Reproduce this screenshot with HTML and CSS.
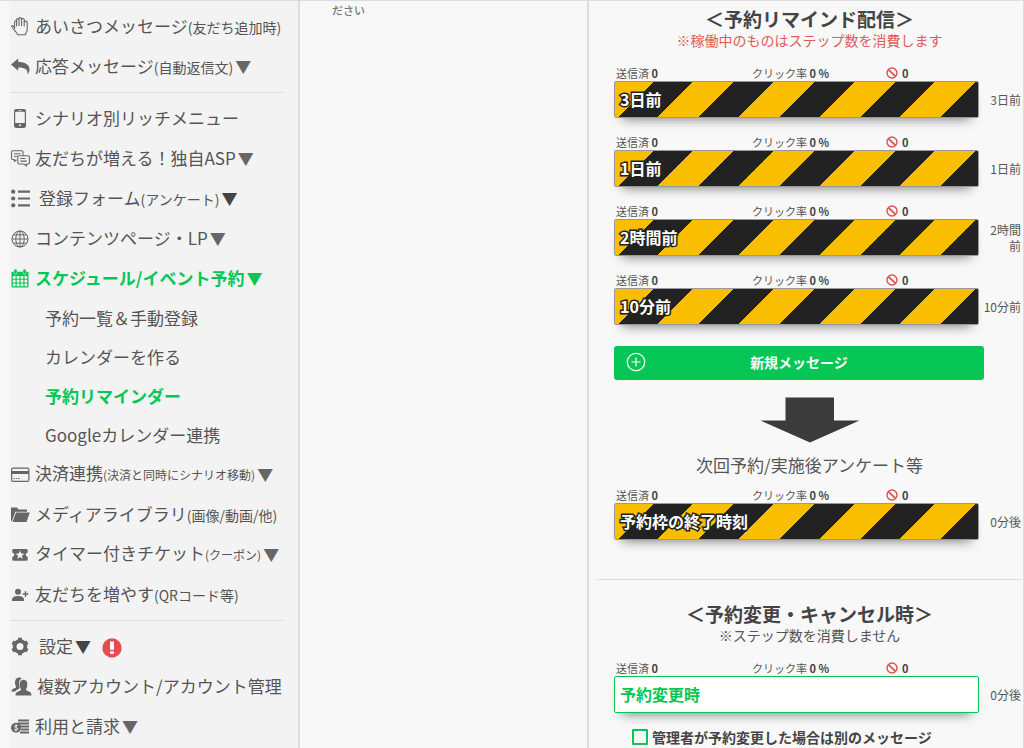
FILE: index.html
```html
<!DOCTYPE html>
<html lang="ja">
<head>
<meta charset="utf-8">
<meta name="viewport" content="width=device-width, initial-scale=1">
<title>予約リマインダー</title>
<link rel="stylesheet" href="styles.css">
</head>
<body>
<svg class="defs" aria-hidden="true">
  <symbol id="ban" viewBox="0 0 12 12"><circle cx="6" cy="6" r="5" fill="none" stroke="currentColor" stroke-width="1.4"/><path d="M2.4 2.6l7.2 6.8" stroke="currentColor" stroke-width="1.8"/></symbol>
</svg>
<div class="app">
  <nav class="sidebar">
    <ul class="menu">
      <li><a class="item" href="#"><svg class="icon" viewBox="0 0 19 19" fill="none" stroke="currentColor" stroke-width="1.1" stroke-linejoin="round" stroke-linecap="round"><path d="M3.600 11.400V5c0-1.600 2-1.600 2 0V9M5.600 8.500V2.900c0-1.700 2.400-1.700 2.400 0V8.500M8 8.500V1.900c0-1.700 2.600-1.700 2.600 0V8.500M10.600 8.500V2.700c0-1.700 2.600-1.700 2.600 0V9M13.200 5.500c0-1.900 3-1.900 3 0V13c0 2.200-1.700 2.300-1.700 4.800H6.500c0-2.200-2-2.800-3.200-4.800L.9 10C.3 8.900 1.500 8 2.300 8.900l1.300 1.500"/></svg><span>あいさつメッセージ<small>(友だち追加時)</small></span></a></li>
      <li><a class="item" href="#"><svg class="icon" viewBox="0 0 19 19" fill="currentColor"><path d="M0 7.500L7.200 1.600v3.300C14 4.900 18.500 7.500 18.500 12.500c0 2-.7 3.600-2 5.100.9-4.500-2.200-7-9.300-7v3.200z"/></svg><span>応答メッセージ<small>(自動返信文)</small></span><span class="caret">▼</span></a></li>
    </ul>
    <hr>
    <ul class="menu">
      <li><a class="item" href="#"><svg class="icon" viewBox="0 0 19 19"><rect x="3.600" y=".6" width="10.800" height="17.800" rx="1.800" fill="none" stroke="currentColor" stroke-width="1.200"/><path d="M3.500 14h11v3.500q0 1-1 1h-9q-1 0-1-1zM3.500 2.800V1.500q0-1 1-1h9q1 0 1 1v1.300z" fill="currentColor"/><circle cx="9" cy="16.200" r="1" fill="#f3f3f3"/><path d="M7.500 1.600h3" stroke="#f3f3f3" stroke-width=".7"/></svg><span>シナリオ別リッチメニュー</span></a></li>
      <li><a class="item" href="#"><svg class="icon" viewBox="0 0 19 19" fill="none" stroke="currentColor" stroke-width="1.100" stroke-linejoin="round"><path d="M5.500 10.800L3.300 12.500V10.500H1.700Q.6 10.500.6 9.400V3Q.6 1.800 1.700 1.800h9.200q1.100 0 1.100 1.200v3.500M3 4.700h6.500M3 7.200h3.500"/><path d="M8 6.700h9.200q1.200 0 1.200 1.200v5.900q0 1.200-1.200 1.200h-1.600v2L13 15H8q-1.200 0-1.200-1.200V7.900Q6.800 6.700 8 6.700zM9.300 9.500h5M9.300 12.100h6.500"/></svg><span>友だちが増える！独自ASP</span><span class="caret">▼</span></a></li>
      <li><a class="item wide" href="#"><svg class="icon" viewBox="0 0 19 19" fill="currentColor"><circle cx="2.200" cy="2.700" r="2.100"/><circle cx="2.200" cy="9.500" r="2.100"/><circle cx="2.200" cy="16.300" r="2.100"/><path d="M7 1.600h12v2.200H7zM7 8.400h12v2.200H7zM7 15.200h12v2.200H7z"/></svg><span>登録フォーム<small>(アンケート)</small></span><span class="caret dark">▼</span></a></li>
      <li><a class="item" href="#"><svg class="icon" viewBox="0 0 19 19" fill="none" stroke="currentColor"><circle cx="9" cy="10" r="8"/><ellipse cx="9" cy="10" rx="4.200" ry="8"/><path d="M9 2v16M1 10h16M2.300 5.800h13.400M2.300 14.200h13.400"/></svg><span>コンテンツページ・LP</span><span class="caret">▼</span></a></li>
      <li><a class="item active" href="#"><svg class="icon" viewBox="0 0 19 19"><path fill="currentColor" fill-rule="evenodd" d="M1.500 2.800h1.700V1.500q0-1.300 1.300-1.300t1.300 1.300v1.300h6.400V1.500q0-1.300 1.300-1.300t1.300 1.300v1.300h1.700q1 0 1 1V17.500q0 1-1 1h-15q-1 0-1-1V3.800q0-1 1-1zM1.800 7v2.700h2.800V7zM5.700 7v2.700h2.800V7zM9.600 7v2.700h2.800V7zM13.500 7v2.700h2.700V7zM1.800 10.800v2.600h2.800v-2.600zM5.700 10.800v2.600h2.800v-2.600zM9.600 10.800v2.600h2.800v-2.600zM13.500 10.800v2.600h2.700v-2.600zM1.800 14.500v2.700h2.800v-2.700zM5.700 14.500v2.700h2.800v-2.700zM9.600 14.500v2.700h2.800v-2.700zM13.500 14.500v2.700h2.700v-2.700z"/><path d="M3.200 3.500q0 2 1.300 2t1.300-2M12.200 3.500q0 2 1.300 2t1.300-2" fill="none" stroke="#f3f3f3" stroke-width=".6"/></svg><span>スケジュール/イベント予約</span><span class="caret">▼</span></a>
        <ul class="submenu">
          <li><a class="item" href="#">予約一覧＆手動登録</a></li>
          <li><a class="item" href="#">カレンダーを作る</a></li>
          <li><a class="item active" href="#" aria-current="page">予約リマインダー</a></li>
          <li><a class="item" href="#">Googleカレンダー連携</a></li>
        </ul>
      </li>
      <li><a class="item" href="#"><svg class="icon" viewBox="0 0 19 19"><rect x=".6" y="3.100" width="17.300" height="13.300" rx="1.500" fill="none" stroke="currentColor" stroke-width="1.200"/><path d="M.6 6h17.300v3H.6z" fill="currentColor"/><path d="M2.500 13.500h1.500M5 13.500h1M7 13.500h1.500" stroke="currentColor"/></svg><span>決済連携<small class="dense">(決済と同時にシナリオ移動)</small></span><span class="caret">▼</span></a></li>
      <li><a class="item" href="#"><svg class="icon" viewBox="0 0 19 19" fill="currentColor"><path d="M0 16V2.500h6l1.500 2H16v2.200H4.300L1 16z"/><path d="M5 7.600h13.800L15.500 17H1.500z"/></svg><span>メディアライブラリ<small>(画像/動画/他)</small></span></a></li>
      <li><a class="item" href="#"><svg class="icon" viewBox="0 0 19 19"><path fill="currentColor" d="M2.500 4h13q1.200 0 1.200 1.200v2.600a2 2 0 0 0 0 4v2.700q0 1.200-1.200 1.200h-13q-1.200 0-1.200-1.200v-2.700a2 2 0 0 0 0-4V5.200Q1.300 4 2.500 4z"/><path fill="#f3f3f3" d="M9 5.500l1.200 3 3.200.2-2.500 2 .9 3.200L9 12.100l-2.800 1.800.9-3.200-2.500-2 3.200-.2z"/></svg><span>タイマー付きチケット<small class="dense">(クーポン)</small></span><span class="caret">▼</span></a></li>
      <li><a class="item" href="#"><svg class="icon" viewBox="0 0 19 19" fill="currentColor"><circle cx="7" cy="6.800" r="3"/><path d="M1 16v-1.500q0-3.500 6-3.500t6 3.500V16zM13.800 6.300h1.400v2h2.200v1.400h-2.200v2.200h-1.400V9.700h-2.100V8.300h2.100z"/></svg><span>友だちを増やす<small>(QRコード等)</small></span></a></li>
    </ul>
    <hr>
    <ul class="menu">
      <li><a class="item wide" href="#"><svg class="icon" viewBox="0 0 19 19" fill="none" stroke="currentColor"><circle cx="9" cy="9.500" r="5.400" stroke-width="3.800"/><path d="M9 .8v3M9 15.200v3M1.500 5.200l2.600 1.500M13.900 12.300l2.600 1.500M1.500 13.800l2.600-1.500M13.900 6.700l2.600-1.500" stroke-width="4"/></svg><span>設定</span><span class="caret dark">▼</span><svg class="alert" viewBox="0 0 20 20" role="img" aria-label="要確認"><circle cx="10" cy="10" r="9.700" fill="#e05050"/><path d="M8 3.500h4v8.300H8zM8.200 13.200h3.600v2.800H8.200z" fill="#fff"/></svg></a></li>
      <li><a class="item accounts" href="#"><svg class="icon" viewBox="0 0 21 19" fill="currentColor"><path d="M.3 14.500c0-2 1.700-2.600 4.300-3.700 1-.6.4-1.500-.1-2.200-1.200-4 0-8 3.500-8 1.300 0 2.200.4 2.700 1C8 3 7.500 5.500 8.200 9c.5 1.500 1 2.200-.5 3-1.500.6-2.500 1.100-3.300 2.500z"/><path d="M4.500 18.500c0-3.300 2-3.800 4.500-4.800 1.600-.7 1-1.800.3-2.700-1.500-4.500-.5-8.200 3.200-8.200s4.700 3.700 3.200 8.200c-.7.900-1.300 2 .3 2.700 2.500 1 4.500 1.500 4.500 4.800z"/></svg><span>複数アカウント/アカウント管理</span></a></li>
      <li><a class="item" href="#"><svg class="icon" viewBox="0 0 19 19"><path d="M7 3.500h11M7 6.500h11M9 9.500h9M10 12.500h8M9 15.500h9" stroke="currentColor" stroke-width="1.900"/><circle cx="5" cy="10.800" r="5" fill="currentColor"/><path d="M6.800 8.800Q4 7.500 3.600 9.300c0 1.400 3 .9 3 2.700 0 1.700-2.300 1.500-3.400.7M5 7.200v7.200" fill="none" stroke="#f3f3f3" stroke-width=".9"/></svg><span>利用と請求</span><span class="caret">▼</span></a></li>
    </ul>
  </nav>

  <section class="middle"><p class="note">ださい</p></section>

  <main class="content">
    <h2 class="title">＜予約リマインド配信＞</h2>
    <p class="sub warn">※稼働中のものはステップ数を消費します</p>
    <div class="messages">
      <article><div class="stats"><span>送信済 <b>0</b></span><span>クリック率 <b>0 %</b></span><span class="blocked"><svg class="ban" role="img" aria-label="ブロック"><use href="#ban"/></svg><b>0</b></span></div><div class="row"><a class="bar striped" href="#">3日前</a><span class="when">3日前</span></div></article>
      <article><div class="stats"><span>送信済 <b>0</b></span><span>クリック率 <b>0 %</b></span><span class="blocked"><svg class="ban" role="img" aria-label="ブロック"><use href="#ban"/></svg><b>0</b></span></div><div class="row"><a class="bar striped" href="#">1日前</a><span class="when">1日前</span></div></article>
      <article><div class="stats"><span>送信済 <b>0</b></span><span>クリック率 <b>0 %</b></span><span class="blocked"><svg class="ban" role="img" aria-label="ブロック"><use href="#ban"/></svg><b>0</b></span></div><div class="row"><a class="bar striped" href="#">2時間前</a><span class="when">2時間前</span></div></article>
      <article><div class="stats"><span>送信済 <b>0</b></span><span>クリック率 <b>0 %</b></span><span class="blocked"><svg class="ban" role="img" aria-label="ブロック"><use href="#ban"/></svg><b>0</b></span></div><div class="row"><a class="bar striped" href="#">10分前</a><span class="when">10分前</span></div></article>
    </div>
    <button class="new" type="button"><svg class="plus" viewBox="0 0 20 20" fill="none" stroke="currentColor" stroke-width="1.200" aria-hidden="true"><circle cx="10" cy="10" r="8.700"/><path d="M10 5.500v9M5.500 10h9"/></svg><span>新規メッセージ</span></button>
    <svg class="arrow" viewBox="0 0 100 46" aria-hidden="true"><path d="M25.500 0.500h48.500v23h25.500L50 45.500.5 23.500h25z" fill="#3b3b3b"/></svg>
    <p class="after">次回予約/実施後アンケート等</p>
    <div class="messages after-list">
      <article><div class="stats"><span>送信済 <b>0</b></span><span>クリック率 <b>0 %</b></span><span class="blocked"><svg class="ban" role="img" aria-label="ブロック"><use href="#ban"/></svg><b>0</b></span></div><div class="row"><a class="bar striped" href="#">予約枠の終了時刻</a><span class="when">0分後</span></div></article>
    </div>
    <hr class="divider">
    <h2 class="title">＜予約変更・キャンセル時＞</h2>
    <p class="sub">※ステップ数を消費しません</p>
    <div class="messages">
      <article><div class="stats"><span>送信済 <b>0</b></span><span>クリック率 <b>0 %</b></span><span class="blocked"><svg class="ban" role="img" aria-label="ブロック"><use href="#ban"/></svg><b>0</b></span></div><div class="row"><a class="bar plain" href="#">予約変更時</a><span class="when">0分後</span></div></article>
    </div>
    <label class="check"><input type="checkbox"><span>管理者が予約変更した場合は別のメッセージ</span></label>
  </main>
</div>
</body>
</html>
```
FILE: styles.css
```css
* { box-sizing: border-box; }
body {
  margin: 0;
  background: #f8f8f8;
  color: #555;
  font-family: "Noto Sans CJK JP", sans-serif;
  font-size: 17px;
}
h2, p, ul { margin: 0; padding: 0; }
ul { list-style: none; }
a { color: inherit; text-decoration: none; }
.defs { display: none; }
.app {
  display: grid;
  grid-template-columns: 300px minmax(0, 289fr) minmax(0, 435fr);
  min-height: 100vh;
  border-top: 1px solid #ddd;
}

/* Sidebar */
.sidebar {
  margin-left: 9px;
  padding: 5px 14px 0 2px;
  background: #f3f3f3;
  border-right: 2px solid #ddd;
}
.sidebar hr {
  height: 1px;
  margin: 6px 0 5px;
  border: 0;
  background: #ddd;
}
.item {
  display: flex;
  align-items: center;
  height: 40px;
  gap: 5px;
  line-height: 24px;
  white-space: nowrap;
}
.item small { font-size: 14px; }
.item small.dense { font-size: 12px; }
.icon { flex: none; width: 19px; height: 19px; color: #666; }
.item.wide .icon { margin-right: 4px; }
.item.accounts .icon { width: 21px; }
.caret { margin-left: -3px; font-size: 16px; color: #666; }
.caret.dark { color: #444; }
.item.active, .item.active .icon, .item.active .caret { color: #06c755; }
.item.active { font-weight: 700; }
.alert { width: 20px; height: 20px; margin: 4px 0 0 6px; }
.submenu { padding-left: 34px; }
.submenu .item { height: 39px; }

/* Middle column */
.middle { padding: 0 32px; border-right: 2px solid #ddd; }
.note { font-size: 11px; font-weight: 500; line-height: 18px; color: #777; }

/* Content */
.content { padding: 6px 1px 0 8px; border-right: 1px solid #ddd; }
.title { font-size: 19px; line-height: 24px; text-align: center; color: #444; }
.sub { font-size: 14px; line-height: 18px; text-align: center; }
.sub.warn { color: #e05a5a; }
.messages { display: grid; gap: 16px; margin: 16px 0 0 17px; }
.stats {
  display: grid;
  grid-template-columns: 136px 134px 1fr;
  padding-left: 2px;
  font-size: 11px;
  line-height: 16px;
}
.stats b { color: #444; }
.blocked { display: flex; align-items: center; gap: 4px; }
.ban { width: 12px; height: 12px; color: #e05050; }
.row {
  display: grid;
  grid-template-columns: minmax(0, 1fr) 43px;
  align-items: center;
}
.bar {
  display: flex;
  align-items: center;
  height: 37px;
  padding: 0 5px 2px;
  border: 1px solid #999;
  border-radius: 2px;
  box-shadow: 0 9px 12px -8px rgba(0, 0, 0, .5);
  font-size: 16px;
  font-weight: 700;
}
.striped {
  background: repeating-linear-gradient(135deg, #fabe00 0 27px, #222 27px 55px, #fabe00 55px 57px);
  color: #fff;
  -webkit-text-stroke: 3px #222;
  paint-order: stroke fill;
}
.plain { border-color: #06c755; background: #fff; color: #06c755; }
.when { padding-right: 1px; font-size: 12px; line-height: 16px; text-align: right; }
.new {
  display: grid;
  grid-template-columns: 20px 1fr 20px;
  align-items: center;
  width: calc(100% - 55px);
  height: 34px;
  margin: 21px 0 0 17px;
  padding: 0 12px 2px;
  border: 0;
  border-radius: 3px;
  background: #06c755;
  color: #fff;
  font-family: inherit;
  font-size: 14px;
  font-weight: 700;
}
.plus { width: 20px; height: 20px; }
.arrow { display: block; width: 100px; height: 46px; margin: 17px auto 10px; }
.after { line-height: 24px; text-align: center; }
.after-list { margin-top: 10px; }
.divider {
  height: 1px;
  margin: 39px 0 22px;
  border: 0;
  background: #ddd;
}
.check {
  display: flex;
  align-items: center;
  gap: 4px;
  margin: 14px 0 0 35px;
  font-size: 14px;
  font-weight: 700;
  line-height: 20px;
  color: #444;
  white-space: nowrap;
}
.check input {
  appearance: none;
  width: 16px;
  height: 16px;
  margin: 0;
  border: 2px solid #06c755;
  border-radius: 1px;
}
.check input:checked { background: #06c755; }
```
